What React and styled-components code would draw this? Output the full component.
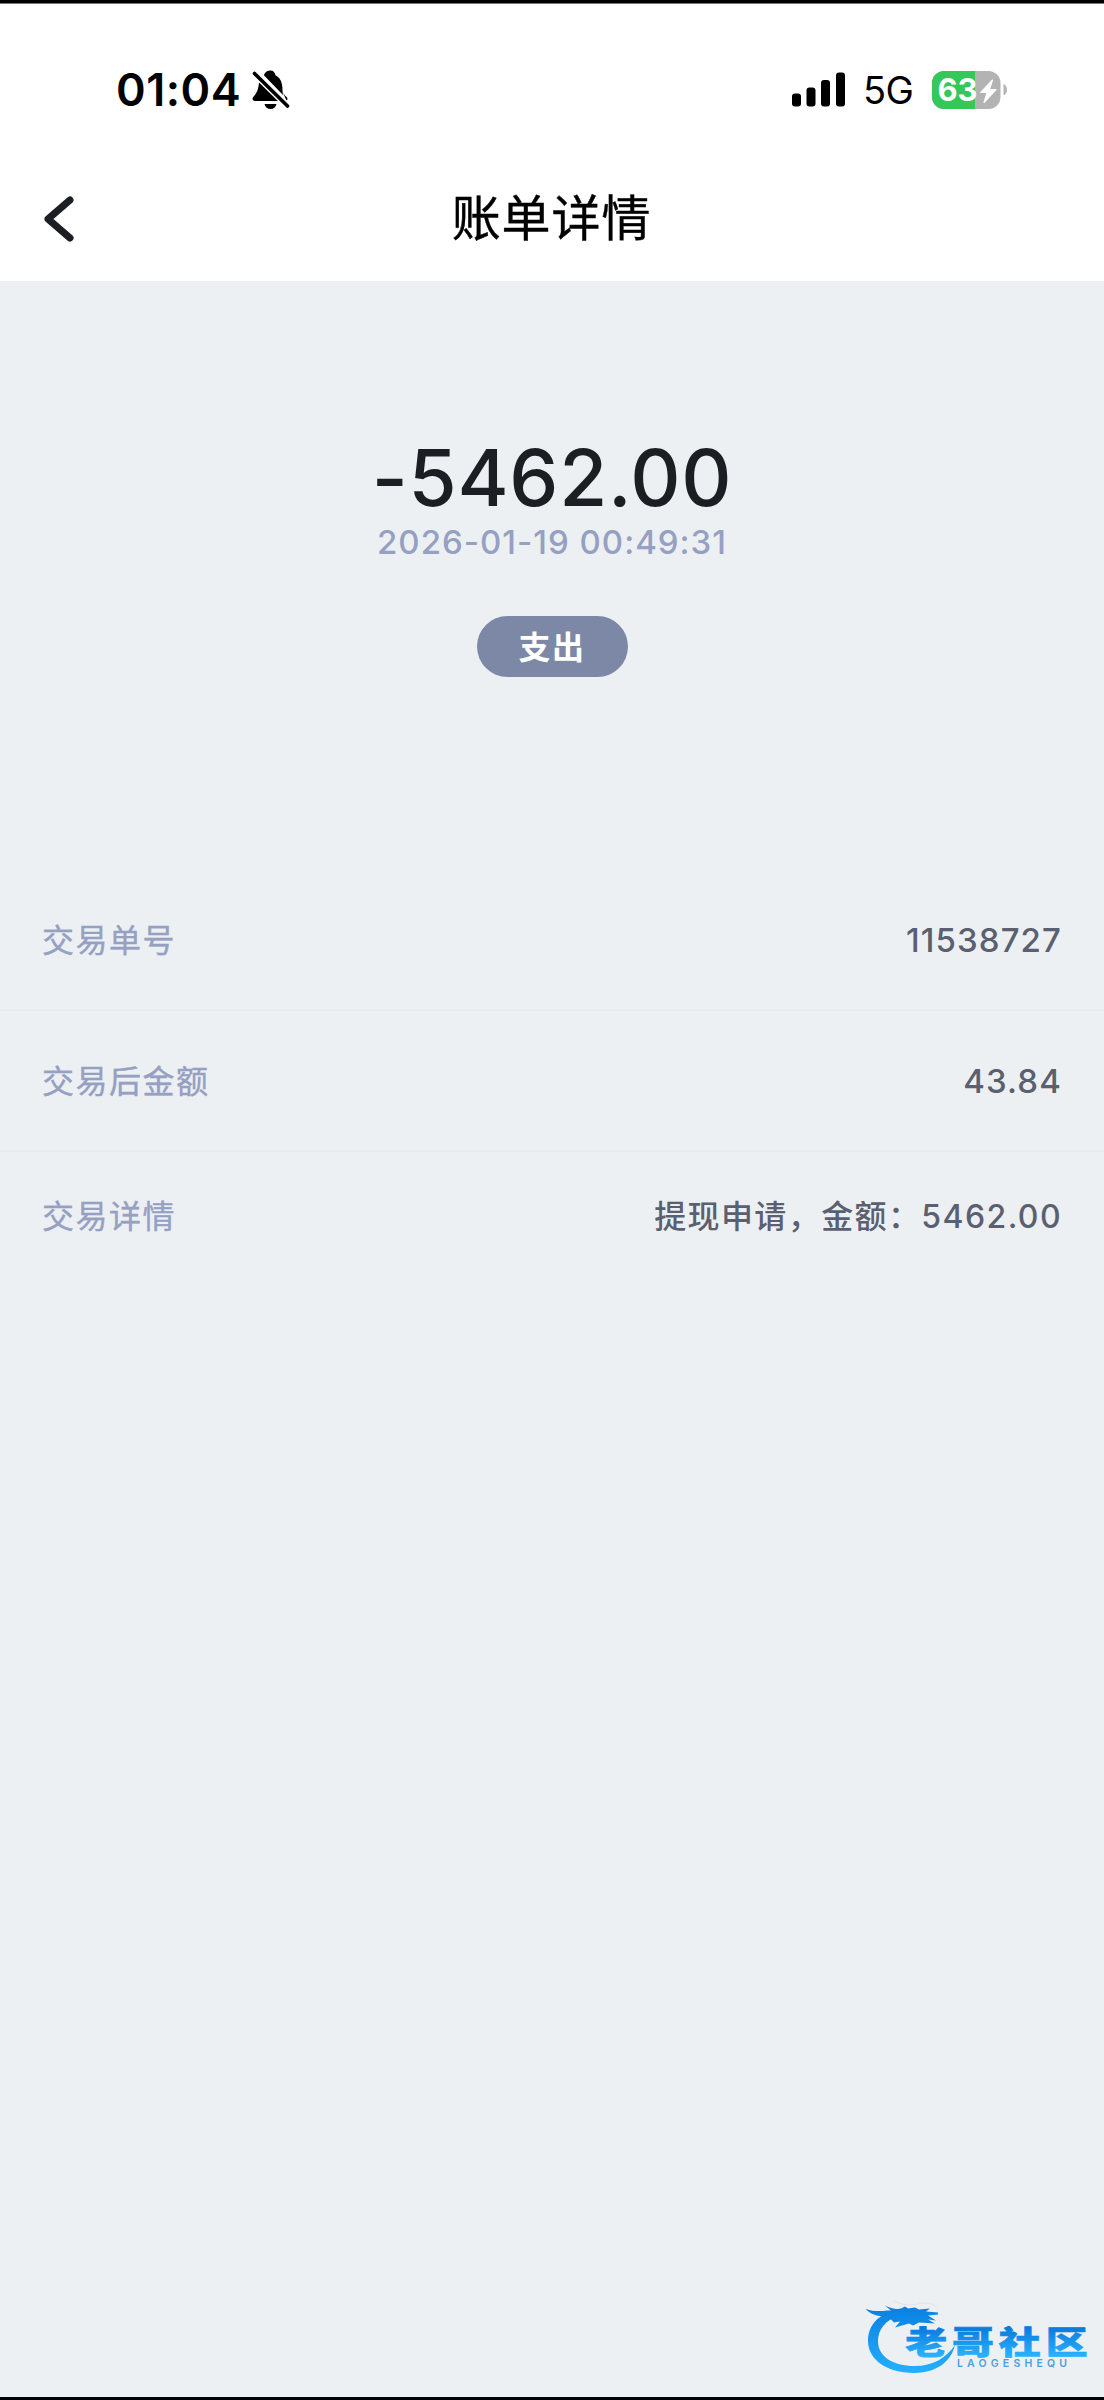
import React from 'react';
import styled, { createGlobalStyle } from 'styled-components';

const GlobalStyle = createGlobalStyle`
	body {
		margin: 0;
		background: #ecf0f3;
	}

	* {
		box-sizing: border-box;
	}
`;

const Screen = styled.div`
	display: flex;
	flex-direction: column;
	position: relative;
	width: 1104px;
	height: 2400px;
	background: #ecf0f3;
	border-top: 3px solid #000;
	border-bottom: 3px solid #000;
	font-family: Inter, 'Noto Sans CJK SC', sans-serif;
	overflow: hidden;
`;

const StatusBar = styled.div`
	display: flex;
	align-items: center;
	justify-content: space-between;
	height: 137px;
	padding: 36px 96px 0 116px;
	background: #fff;
	border-top: 1px solid #777;
`;

const StatusGroup = styled.div`
	display: flex;
	align-items: center;
`;

const Clock = styled.span`
	width: 136px;
	font-size: 45px;
	font-weight: 600;
	line-height: 54px;
	letter-spacing: 0.5px;
	color: #000;
`;

const Network = styled.span`
	width: 85px;
	padding-left: 16px;
	font-size: 38px;
	line-height: 54px;
	letter-spacing: -0.5px;
	color: #000;
`;

const Header = styled.div`
	display: grid;
	grid-template-columns: 120px 1fr 120px;
	align-items: center;
	height: 141px;
	padding-top: 17px;
	background: #fff;

	svg {
		margin-left: 44px;
	}
`;

const Title = styled.h1`
	margin: 0;
	font-size: 49px;
	font-weight: 400;
	line-height: 60px;
	letter-spacing: 0.9px;
	text-align: center;
	text-indent: -1px;
	-webkit-text-stroke: 0.4px;
	color: #000;
`;

const Summary = styled.div`
	display: flex;
	flex-direction: column;
	align-items: center;
	height: 589px;
	padding-top: 149px;
`;

const Amount = styled.div`
	font-size: 78px;
	font-weight: 500;
	line-height: 96px;
	letter-spacing: 0.7px;
	color: #1b1f24;
`;

const Time = styled.div`
	font-size: 33px;
	font-weight: 500;
	line-height: 40px;
	margin-top: -4px;
	letter-spacing: 1px;
	color: #95a0c3;
`;

const Tag = styled.div`
	width: 151px;
	height: 61px;
	margin-top: 54px;
	border-radius: 31px;
	background: #7c88a6;
	font-size: 32px;
	font-weight: 700;
	line-height: 63px;
	letter-spacing: 1.5px;
	text-align: center;
	color: #fff;
`;

const Row = styled.div`
	display: flex;
	align-items: center;
	justify-content: space-between;
	height: ${(props) => (props.$last ? '127px' : '141px')};
	padding: 0 42px;
	border-bottom: ${(props) => (props.$last ? 'none' : '2px solid #e8ebee')};
	font-size: 32px;
	line-height: 48px;
	letter-spacing: 1.5px;
`;

const Label = styled.span`
	-webkit-text-stroke: 0.4px;
	padding-top: 3px;
	color: #95a0c3;
`;

const Value = styled.span`
	padding-top: ${(props) => (props.$numeric ? '1px' : '3px')};
	font-size: ${(props) => (props.$numeric ? '33px' : '32px')};
	font-weight: 500;
	letter-spacing: ${(props) => (props.$numeric ? '1.1px' : '1.4px')};
	color: #5a6070;
`;

const Watermark = styled.div`
	position: absolute;
	right: 0;
	bottom: -3px;
	width: 254px;
	height: 120px;
`;

const rows = [
	{ label: '交易单号', value: '11538727', numeric: true },
	{ label: '交易后金额', value: '43.84', numeric: true },
	{ label: '交易详情', value: '提现申请，金额：5462.00' },
];

const BellOff = () => (
	<svg width="38" height="40" viewBox="0 0 38 40">
		<path d="M18.500 0.500c-3.300 0-5.800 2-6.600 4.800L31 25c-.6-3-.3-6-1-10.500-.8-4.800-3.300-7.800-6.500-9.300-.8-2.900-2.200-4.700-5-4.700Z" />
		<path d="M7.200 11.500 27.500 31H3c-2.700 0-3.200-2.600-1.400-4.500 3.500-3.700 4.800-7.500 5.600-15Z" />
		<path d="M30.500 22c1 2.200 2.500 3.500 4.300 5.200 1 1 .8 2.600-.3 3.300Z" />
		<path d="M12.500 34h12c-.6 3-3 5-6 5s-5.400-2-6-5Z" />
		<path d="M3 4 35.500 36" stroke="#fff" strokeWidth="6.500" />
		<path d="M2.500 3.500 35.500 36" stroke="#000" strokeWidth="3.600" strokeLinecap="round" />
	</svg>
);

const Signal = () => (
	<svg width="55" height="36" viewBox="0 0 55 36">
		<rect x="0" y="21.500" width="9" height="13" rx="3" />
		<rect x="14.500" y="15.500" width="9" height="19" rx="3" />
		<rect x="29" y="8" width="9" height="26.500" rx="3" />
		<rect x="44" y="0.500" width="9" height="34" rx="3" />
	</svg>
);

const Battery = () => (
	<svg width="76" height="38" viewBox="0 0 76 38">
		<clipPath id="battery">
			<rect width="68.500" height="38" rx="12" />
		</clipPath>
		<g clipPath="url(#battery)">
			<rect width="69" height="38" fill="#b3b3b3" />
			<rect width="43" height="38" fill="#34c759" />
		</g>
		<path d="M71.500 13c2.200.8 3.500 3 3.500 5.700s-1.300 4.800-3.500 5.600Z" fill="#b3b3b3" />
		<text x="5.500" y="30.300" fontSize="31" fontWeight="700" textLength="40" fill="#fff">
			63
		</text>
		<path
			d="M60.500 9 48.800 21.500h6.400L52 31.500l12-13h-6.600Z"
			fill="#fff"
			stroke="#fff"
			strokeWidth="1.200"
			strokeLinejoin="round"
		/>
	</svg>
);

const Logo = () => (
	<svg width="254" height="120" viewBox="0 0 254 120">
		<defs>
			<linearGradient id="ring" x1="0" y1="26" x2="0" y2="94" gradientUnits="userSpaceOnUse">
				<stop offset="0" stopColor="#0a7fe0" />
				<stop offset="1" stopColor="#25b0ff" />
			</linearGradient>
			<linearGradient id="name" x1="0" y1="47" x2="0" y2="77" gradientUnits="userSpaceOnUse">
				<stop offset="0" stopColor="#0879dc" />
				<stop offset="1" stopColor="#2bb4ff" />
			</linearGradient>
		</defs>
		<path
			d="M47 31C29 33 18 45 18 61c0 18 18 32 46 32 22 0 37-11 41-28-9 13-22 21-40 21-23 0-37-10-37-25 0-11 7-21 22-26Z"
			fill="url(#ring)"
		/>
		<path
			d="M16 29c7 2.500 14 2.500 21 1.500l4 0-6-5c6 3 11 4 16 3l4-2 3 2 7-1 4 2 11-1-4 3 12 1v2l-10 1 8 5-8-1 7 4-16-1-6 3-4-2-7 2-7 2 5-6-6 1-5-5c-8-1-17-2-23-8Z"
			fill="url(#ring)"
		/>
		<path d="M44 21c8 4 18 5 24 3 7-2 14-1 19 3" fill="none" stroke="#dce6ef" />
		<g
			fill="url(#name)"
			stroke="url(#name)"
			strokeWidth="0.700"
			fontFamily="'Noto Sans CJK SC', sans-serif"
			fontWeight="900"
			fontSize="31.500"
		>
			<text transform="scale(1.330 1)" y="74" x="41.500 76.700 111.900 147.100">
				老哥社区
			</text>
		</g>
		<text x="107" y="86.700" fontSize="10.500" fontWeight="600" textLength="110" fill="#4f9ddd">
			LAOGESHEQU
		</text>
	</svg>
);

export default function App() {
	return (
		<>
			<GlobalStyle />
			<Screen>
				<StatusBar>
					<StatusGroup>
						<Clock>01:04</Clock>
						<BellOff />
					</StatusGroup>
					<StatusGroup>
						<Signal />
						<Network>5G</Network>
						<Battery />
					</StatusGroup>
				</StatusBar>
				<Header>
					<svg width="30" height="48" viewBox="0 0 30 48" fill="none">
						<path d="M26 5 4 24l22 19" stroke="#1b1f24" strokeWidth="7" strokeLinecap="round" strokeLinejoin="round" />
					</svg>
					<Title>账单详情</Title>
				</Header>
				<Summary>
					<Amount>-5462.00</Amount>
					<Time>2026-01-19 00:49:31</Time>
					<Tag>支出</Tag>
				</Summary>
				{rows.map((row, i) => (
					<Row key={row.label} $last={i === rows.length - 1}>
						<Label>{row.label}</Label>
						<Value $numeric={row.numeric}>{row.value}</Value>
					</Row>
				))}
				<Watermark>
					<Logo />
				</Watermark>
			</Screen>
		</>
	);
}
